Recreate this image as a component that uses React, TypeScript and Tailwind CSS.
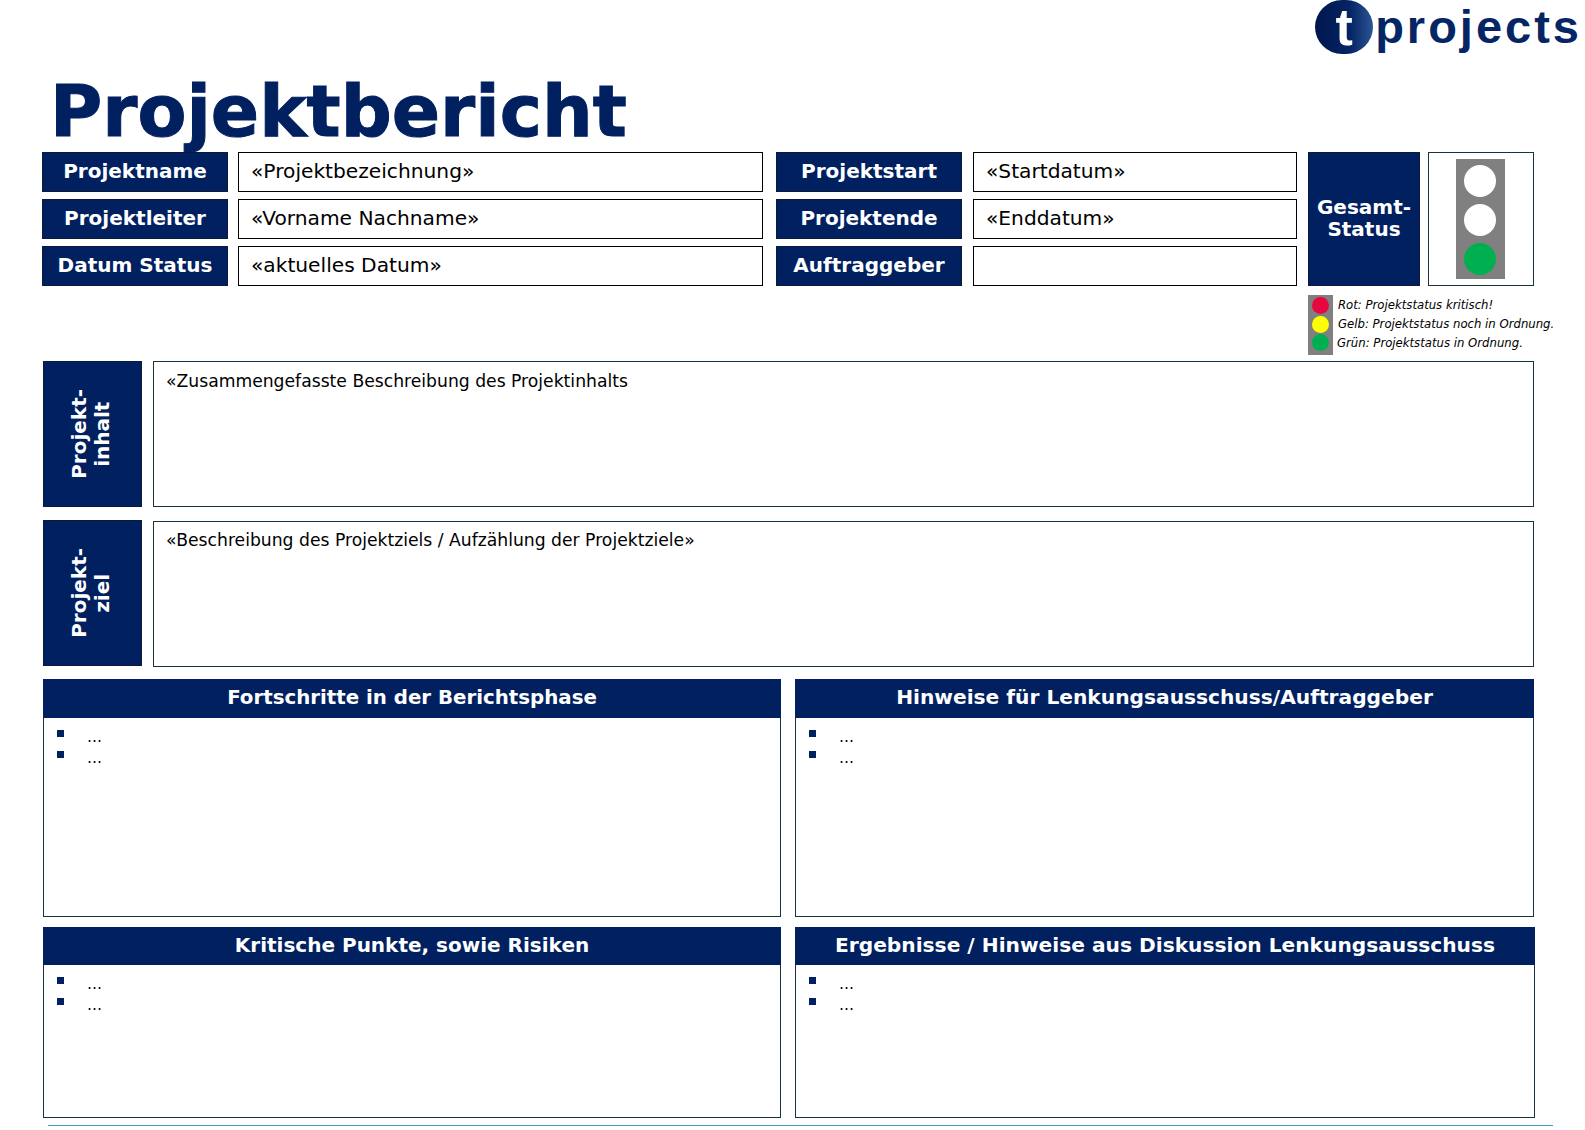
function Label({ children }: { children: React.ReactNode }) {
  return (
    <div className="h-[40px] pb-[2px] bg-[#002060] border border-[#0b1a3c] flex items-center justify-center text-white font-bold text-[20px] whitespace-nowrap">
      {children}
    </div>
  )
}

function Field({ children }: { children?: React.ReactNode }) {
  return (
    <div className="h-[40px] pb-[2px] bg-white border border-black flex items-center pl-[12px] text-black text-[20.2px] whitespace-nowrap">
      {children}
    </div>
  )
}

function Light({ color }: { color: string }) {
  return <div className={`w-[32px] h-[32px] rounded-full ${color}`} />
}

function LegendDot({ color }: { color: string }) {
  return <div className={`w-[17px] h-[17px] rounded-full ${color}`} />
}

function TextBlock({ top, bottom, text, shifted }: { top: string; bottom: string; text: string; shifted?: boolean }) {
  return (
    <div className="flex">
      <div className="w-[99px] h-[146px] bg-[#002060] border border-[#0b1a3c] flex items-center justify-center">
        <div className="[writing-mode:vertical-rl] rotate-180 ml-[-3px] text-white font-bold text-[20px] leading-[23px] text-center">
          {top}
          <br />
          {bottom}
        </div>
      </div>
      <div className={`${shifted ? 'mt-px pt-[8px]' : 'pt-[9px]'} ml-[11px] w-[1381px] h-[146px] bg-white border border-[#17333f] pl-[12px] text-[17.2px] leading-[20px] text-black whitespace-nowrap`}>
        {text}
      </div>
    </div>
  )
}

function Panel({ title, width, height, header }: { title: string; width: string; height: string; header: string }) {
  return (
    <div className={`${width} ${height} border border-[#17333f] bg-white flex flex-col`}>
      <div className={`${header} bg-[#002060] -mx-px -mt-px flex items-center justify-center text-white font-bold whitespace-nowrap`}>
        {title}
      </div>
      <ul className="pl-[13px] pt-[10px] flex flex-col gap-[4px] text-[15px] leading-[16px] text-black">
        {[0, 1].map((i) => (
          <li key={i} className="flex">
            <span className="w-[7px] h-[7px] bg-[#002060] mt-[2px]" />
            <span className="ml-[23px] mt-[1px]">…</span>
          </li>
        ))}
      </ul>
    </div>
  )
}

export default function App() {
  return (
    <div className="w-[1585px] h-[1130px] bg-white overflow-hidden font-['DejaVu_Sans',sans-serif] pl-[42px]">
      <div className="h-[54px] flex justify-end pr-[3px]">
        <div className="flex items-start">
          <div className="w-[58px] h-[54px] rounded-full bg-[linear-gradient(90deg,#00174d_0%,#052464_60%,#2c5494_100%)] flex items-center justify-center text-white font-['Liberation_Sans',sans-serif] font-bold text-[52px] leading-[54px]">
            t
          </div>
          <div className="ml-[2px] font-['Liberation_Sans',sans-serif] font-bold text-[47px] leading-[54px] tracking-[3px] text-[#062565]">
            projects
          </div>
        </div>
      </div>

      <div className="h-[98px] pl-[8px] pt-[14px] text-[71.3px] leading-[88px] font-bold text-[#002060] whitespace-nowrap [-webkit-text-stroke:1px_#002060]">
        Projektbericht
      </div>

      <div className="flex">
        <div className="w-[186px] flex flex-col gap-[7px]">
          <Label>Projektname</Label>
          <Label>Projektleiter</Label>
          <Label>Datum Status</Label>
        </div>
        <div className="ml-[10px] w-[525px] flex flex-col gap-[7px]">
          <Field>«Projektbezeichnung»</Field>
          <Field>«Vorname Nachname»</Field>
          <Field>«aktuelles Datum»</Field>
        </div>
        <div className="ml-[13px] w-[186px] flex flex-col gap-[7px]">
          <Label>Projektstart</Label>
          <Label>Projektende</Label>
          <Label>Auftraggeber</Label>
        </div>
        <div className="ml-[11px] w-[324px] flex flex-col gap-[7px]">
          <Field>«Startdatum»</Field>
          <Field>«Enddatum»</Field>
          <Field />
        </div>
        <div className="ml-[11px]">
          <div className="flex">
            <div className="w-[112px] h-[134px] pb-[2px] bg-[#002060] border border-[#0b1a3c] flex items-center justify-center text-center text-white font-bold text-[20px] leading-[22px]">
              Gesamt-
              <br />
              Status
            </div>
            <div className="ml-[8px] w-[106px] h-[134px] pr-[2px] bg-white border border-[#17333f] flex items-center justify-center">
              <div className="w-[49px] h-[120px] pt-[2px] bg-[#808080] flex flex-col items-center justify-center gap-[7px]">
                <Light color="bg-white" />
                <Light color="bg-white" />
                <Light color="bg-[#00b050]" />
              </div>
            </div>
          </div>
          <div className="flex mt-[9px] h-[60px]">
            <div className="w-[25px] h-[60px] pb-[2px] bg-[#808080] flex flex-col items-center justify-center gap-[1.5px]">
              <LegendDot color="bg-[#e8063f]" />
              <LegendDot color="bg-[#ffff00]" />
              <LegendDot color="bg-[#00b050]" />
            </div>
            <div className="ml-[5px] w-[230px] pt-[1px] flex flex-col italic text-[11.7px] leading-[19px] text-black whitespace-nowrap">
              <span>Rot: Projektstatus kritisch!</span>
              <span>Gelb: Projektstatus noch in Ordnung.</span>
              <span className="-ml-px">Grün: Projektstatus in Ordnung.</span>
            </div>
          </div>
        </div>
      </div>

      <div className="ml-[1px] mt-[6px] flex flex-col gap-[13px]">
        <TextBlock top="Projekt-" bottom="inhalt" text="«Zusammengefasste Beschreibung des Projektinhalts" />
        <TextBlock top="Projekt-" bottom="ziel" shifted text="«Beschreibung des Projektziels / Aufzählung der Projektziele»" />
      </div>

      <div className="ml-[1px] mt-[12px] flex gap-[14px]">
        <Panel title="Fortschritte in der Berichtsphase" width="w-[738px]" height="h-[238px]" header="h-[39px] pb-[2px] text-[19.8px]" />
        <Panel title="Hinweise für Lenkungsausschuss/Auftraggeber" width="w-[739px]" height="h-[238px]" header="h-[39px] pb-[3px] text-[20.2px]" />
      </div>

      <div className="ml-[1px] mt-[10px] flex gap-[14px]">
        <Panel title="Kritische Punkte, sowie Risiken" width="w-[738px]" height="h-[191px]" header="h-[38px] pb-[2px] text-[20px]" />
        <Panel title="Ergebnisse / Hinweise aus Diskussion Lenkungsausschuss" width="w-[740px]" height="h-[191px]" header="h-[38px] pb-[2px] text-[20.2px]" />
      </div>

      <div className="ml-[6px] mt-[7px] w-[1505px] h-[1px] bg-[#3f9fb0]" />
    </div>
  )
}
